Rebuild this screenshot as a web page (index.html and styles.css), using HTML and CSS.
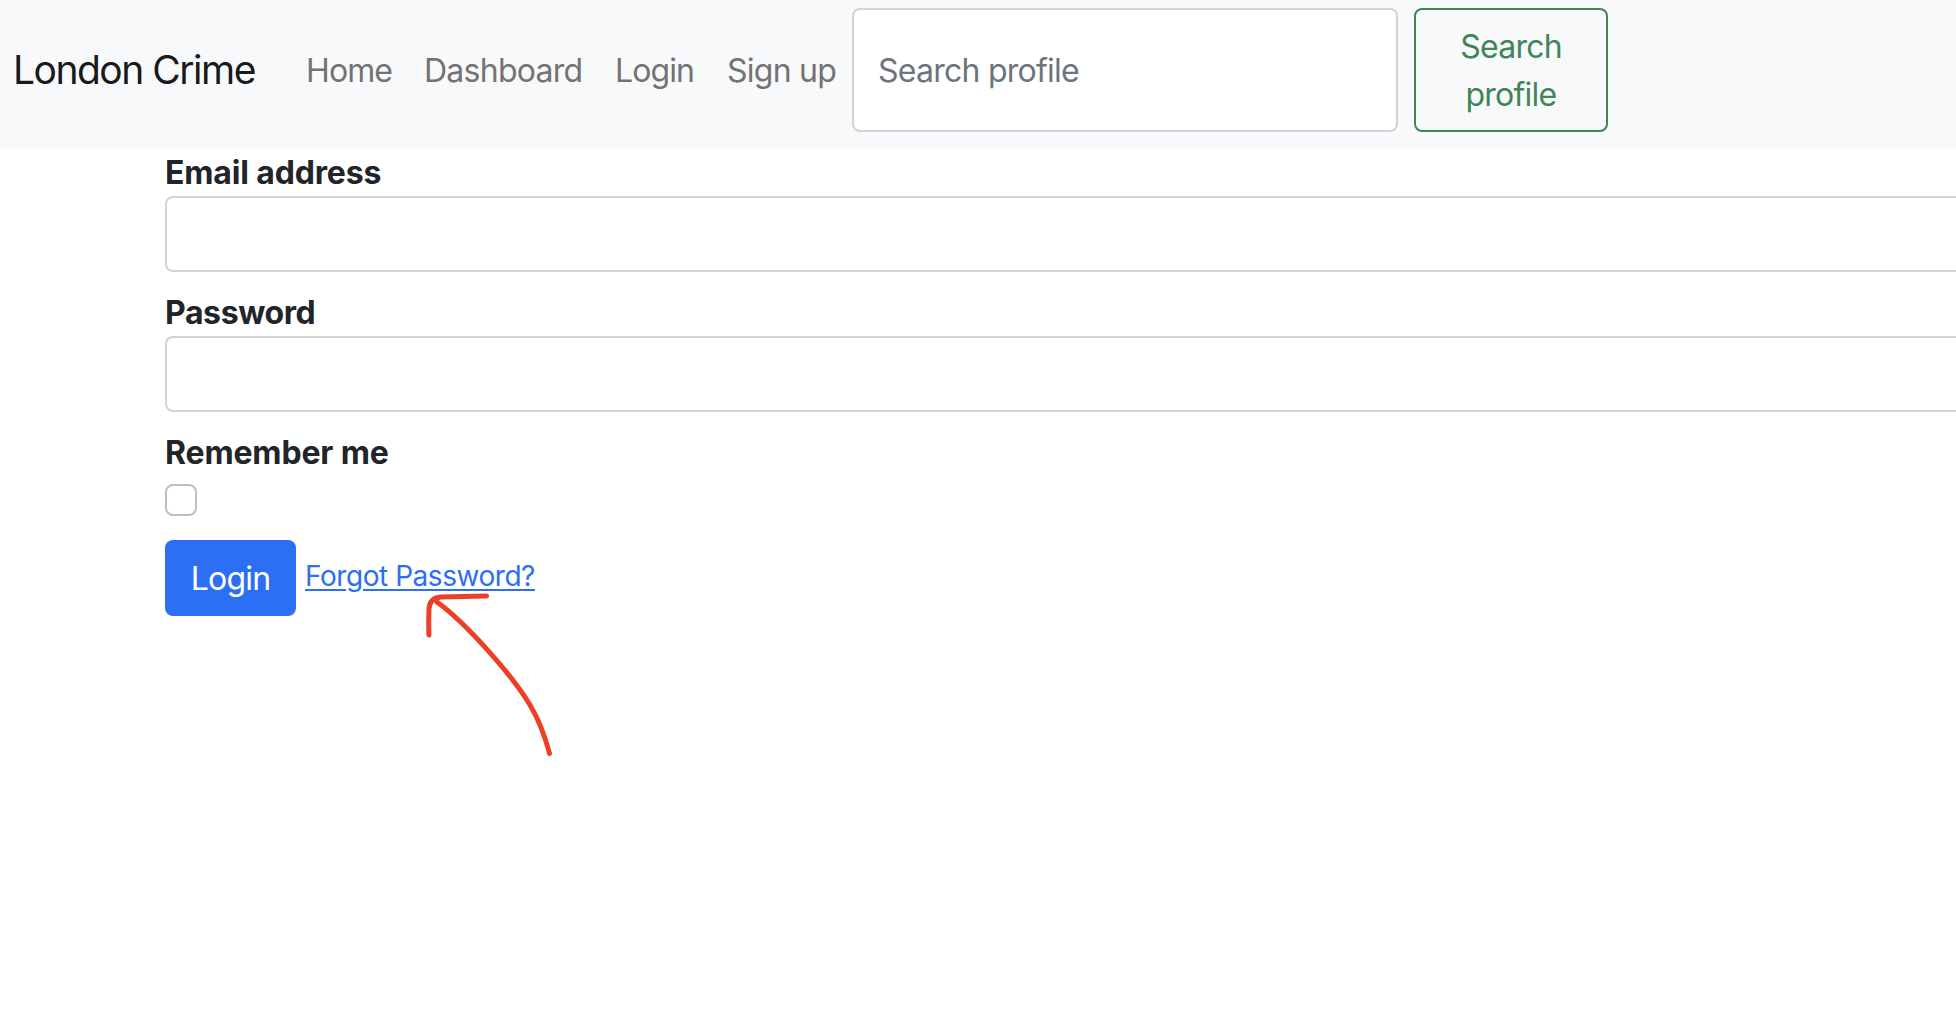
FILE: index.html
```html
<!DOCTYPE html>
<html lang="en">
<head>
<meta charset="utf-8">
<title>London Crime</title>
<link rel="stylesheet" href="styles.css">
</head>
<body>
<nav class="navbar">
  <a class="brand">London Crime</a>
  <a class="nav-link nav-home">Home</a>
  <a class="nav-link nav-dashboard">Dashboard</a>
  <a class="nav-link nav-login">Login</a>
  <a class="nav-link nav-signup">Sign up</a>
  <form class="search">
    <input class="search-input" type="search" placeholder="Search profile">
    <button class="search-button" type="button">Search profile</button>
  </form>
</nav>
<main class="page">
  <form class="login-form">
    <label class="label" for="email">Email address</label>
    <input class="field" id="email" type="text">
    <label class="label label-password" for="password">Password</label>
    <input class="field" id="password" type="password">
    <label class="label" for="remember">Remember me</label>
    <input class="check" id="remember" type="checkbox">
    <div class="actions">
      <button class="login-button" type="button">Login</button>
      <a class="forgot">Forgot Password?</a>
    </div>
  </form>
  <svg class="arrow" width="140" height="180" viewBox="420 585 140 180" aria-hidden="true">
    <path d="M486.500 596 L441 597 Q429.500 598 429 609 Q428.500 621 428.900 635"/>
    <path d="M437 602 C466 623 512 675 530 705 C539 720 545 736 549.500 753.500"/>
  </svg>
</main>
</body>
</html>
```
FILE: styles.css
```css
* {
  box-sizing: border-box;
}

body {
  margin: 0;
  background: #fff;
  color: #212529;
  font: 32px/48px Inter, "Liberation Sans", sans-serif;
}

input,
button {
  margin: 0;
  font: inherit;
  letter-spacing: inherit;
}

.navbar {
  display: flex;
  align-items: center;
  height: 148px;
  padding: 0 0 8px 13px;
  background: #f8f9fb;
  white-space: nowrap;
}

.brand {
  flex: none;
  width: 293px;
  color: #191a1b;
  font-size: 39px;
  letter-spacing: -1.5px;
}

.nav-link {
  flex: none;
  padding-top: 2px;
  color: #737373;
  letter-spacing: -0.9px;
}

.nav-home { width: 118px; }
.nav-dashboard {
  width: 191px;
  letter-spacing: -0.75px;
}
.nav-login { width: 112px; }
.nav-signup {
  width: 125px;
  letter-spacing: -0.75px;
}

.search {
  display: flex;
  gap: 16px;
  height: 124px;
  letter-spacing: -0.75px;
}

.search-input {
  width: 546px;
  padding: 2px 24px 0;
  border: 2px solid #ced4da;
  border-radius: 8px;
  background: #fff;
  appearance: none;
}

.search-input::placeholder {
  color: #6c757d;
  opacity: 1;
}

.search-button {
  width: 194px;
  padding: 2px 24px 0;
  border: 2px solid #3f8657;
  border-radius: 8px;
  background: transparent;
  color: #3f8657;
  white-space: normal;
}

.page {
  position: relative;
  min-height: 876px;
  padding-left: 165px;
}

.login-form {
  display: flex;
  flex-direction: column;
  align-items: flex-start;
}

.label {
  height: 48px;
  padding-top: 1px;
  font-weight: 700;
  letter-spacing: -0.15px;
}

.label-password {
  letter-spacing: -0.4px;
}

.field {
  flex: none;
  width: 100%;
  height: 76px;
  margin-bottom: 16px;
  border: 2px solid #ced4da;
  border-right: 0;
  border-radius: 8px 0 0 8px;
  background: #fff;
}

.check {
  width: 32px;
  height: 32px;
  margin: 8px 0 24px;
  border: 2px solid #bfbfbf;
  border-radius: 8px;
  background: #fff;
  appearance: none;
}

.actions {
  display: flex;
  gap: 9px;
}

.login-button {
  width: 131px;
  height: 76px;
  padding: 2px 0 0;
  border: 0;
  border-radius: 8px;
  background: #2d6ff4;
  color: #fff;
  letter-spacing: -0.8px;
}

.forgot {
  padding-top: 12px;
  color: #2d6ff4;
  font-size: 28px;
  letter-spacing: -0.45px;
  text-decoration: underline;
  text-decoration-thickness: 2px;
  text-underline-offset: 3px;
}

.arrow {
  position: absolute;
  top: 437px;
  left: 420px;
  fill: none;
  stroke: #ec4026;
  stroke-width: 5;
  stroke-linecap: round;
  stroke-linejoin: round;
}
```
